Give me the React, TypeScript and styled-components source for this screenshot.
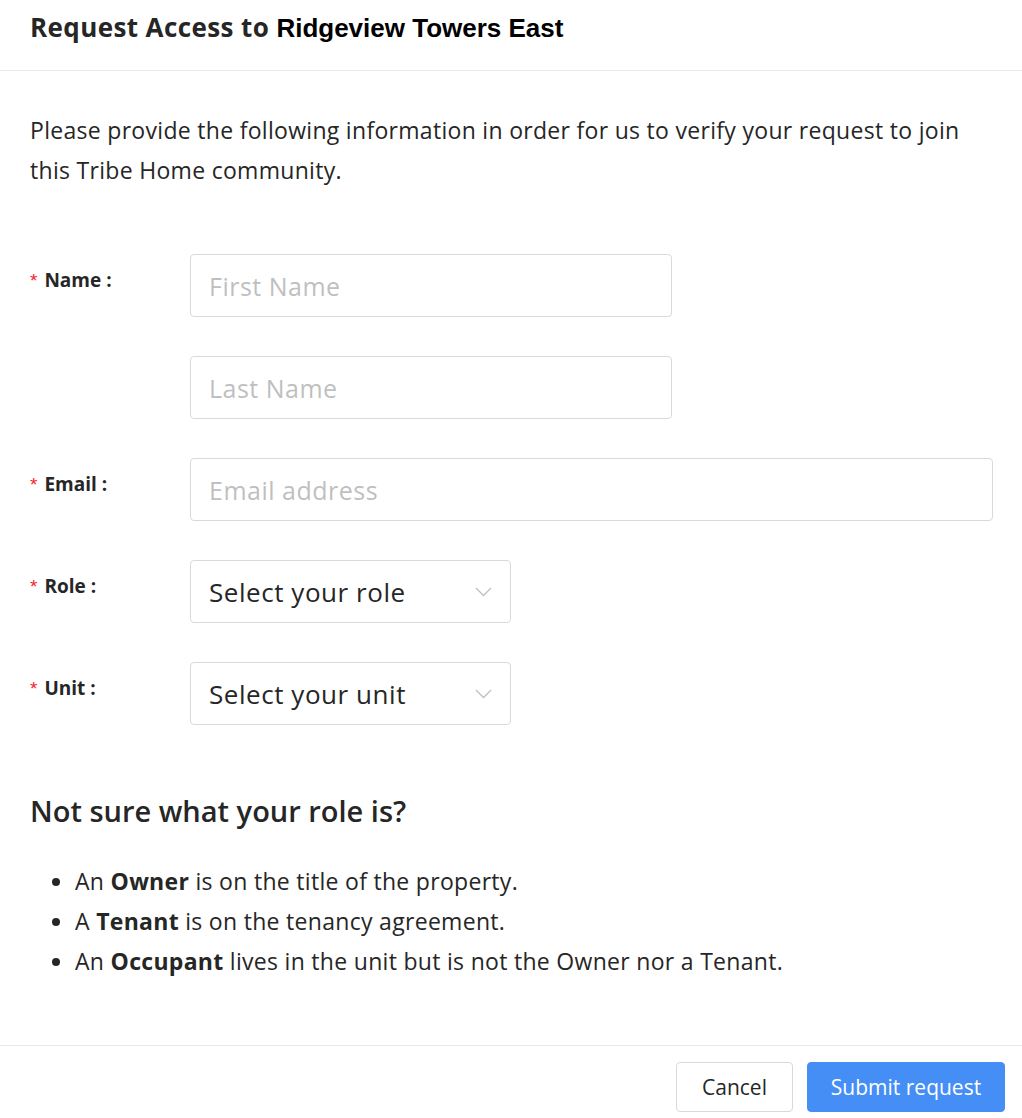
import React from "react";
import styled, { createGlobalStyle } from "styled-components";

const Global = createGlobalStyle`
  html, body { margin: 0; padding: 0; background: #ffffff; }
  body { font-family: "Open Sans", "Liberation Sans", sans-serif; color: #262626; }
  * { box-sizing: border-box; }
`;

const Modal = styled.div`
  width: 1022px;
  display: flex;
  flex-direction: column;
  background: #fff;
`;

const Header = styled.div`
  height: 71px;
  padding: 11px 30px 0 30px;
  border-bottom: 1px solid #e8e8e8;
`;

const Title = styled.h1`
  margin: 0;
  font-size: 26px;
  line-height: 32px;
  font-weight: 700;
  color: #262626;
  letter-spacing: 0.4px;
`;

const Place = styled.span`
  font-family: "Liberation Sans", Arial, sans-serif;
  font-size: 26px;
  letter-spacing: 0;
  color: #000;
`;

const Body = styled.div`
  padding: 39px 29px 64px 30px;
`;

const Intro = styled.p`
  margin: 0;
  font-size: 23px;
  letter-spacing: 0.3px;
  line-height: 40px;
  color: #262626;
`;

const Form = styled.div`
  margin-top: 64px;
  display: grid;
  grid-template-columns: 160px 1fr;
  row-gap: 39px;
`;

const Label = styled.div`
  padding-top: 14px;
  font-size: 19px;
  line-height: 24px;
  font-weight: 700;
  color: #262626;
  display: flex;
  align-items: baseline;
`;

const Star = styled.span`
  color: #f5222d;
  font-size: 19px;
  margin-right: 7px;
  font-family: "Liberation Sans", sans-serif;
  font-weight: 400;
`;

const Colon = styled.span`
  margin-left: 5px;
`;

const Field = styled.div<{ $w: string }>`
  grid-column: 2;
  width: ${(p) => p.$w};
  height: 63px;
  border: 1px solid #d9d9d9;
  border-radius: 4px;
  padding: 0 18px;
  display: flex;
  align-items: center;
  justify-content: space-between;
  background: #fff;
`;

const Placeholder = styled.span`
  font-size: 25px;
  letter-spacing: 0.5px;
  color: #bfbfbf;
`;

const Value = styled.span`
  font-size: 26px;
  letter-spacing: 0.55px;
  color: #262626;
`;

const Chevron = () => (
  <svg width="17" height="10" viewBox="0 0 17 10" fill="none">
    <path d="M1 1 L8.5 8.5 L16 1" stroke="#bfbfbf" strokeWidth="1.3" />
  </svg>
);

const Help = styled.h2`
  margin: 66px 0 0 0;
  font-size: 29px;
  line-height: 40px;
  font-weight: 600;
  color: #262626;
`;

const List = styled.ul`
  margin: 30px 0 0 0;
  padding-left: 45px;
  font-size: 23px;
  letter-spacing: 0.3px;
  line-height: 40px;
  color: #262626;
`;

const Item = styled.li`
  padding-left: 0;
`;

const Footer = styled.div`
  border-top: 1px solid #e8e8e8;
  padding: 16px 17px 5px 0;
  display: flex;
  justify-content: flex-end;
  gap: 14px;
`;

const Button = styled.button<{ $primary?: boolean; $w: number }>`
  width: ${(p) => p.$w}px;
  height: 50px;
  padding: 0;
  font-family: inherit;
  font-size: 21px;
  border-radius: 4px;
  border: 1px solid ${(p) => (p.$primary ? "#448ef6" : "#d9d9d9")};
  background: ${(p) => (p.$primary ? "#448ef6" : "#fff")};
  color: ${(p) => (p.$primary ? "#fff" : "#262626")};
  cursor: pointer;
`;

export default function App() {
  return (
    <>
      <Global />
      <Modal>
        <Header>
          <Title>
            Request Access to <Place>Ridgeview Towers East</Place>
          </Title>
        </Header>
        <Body>
          <Intro>
            Please provide the following information in order for us to verify your request to join
            this Tribe Home community.
          </Intro>
          <Form>
            <Label>
              <Star>*</Star>Name<Colon>:</Colon>
            </Label>
            <Field $w="482px">
              <Placeholder>First Name</Placeholder>
            </Field>
            <Field $w="482px">
              <Placeholder>Last Name</Placeholder>
            </Field>
            <Label>
              <Star>*</Star>Email<Colon>:</Colon>
            </Label>
            <Field $w="100%">
              <Placeholder>Email address</Placeholder>
            </Field>
            <Label>
              <Star>*</Star>Role<Colon>:</Colon>
            </Label>
            <Field $w="321px">
              <Value>Select your role</Value>
              <Chevron />
            </Field>
            <Label>
              <Star>*</Star>Unit<Colon>:</Colon>
            </Label>
            <Field $w="321px">
              <Value>Select your unit</Value>
              <Chevron />
            </Field>
          </Form>
          <Help>Not sure what your role is?</Help>
          <List>
            <Item>
              An <b>Owner</b> is on the title of the property.
            </Item>
            <Item>
              A <b>Tenant</b> is on the tenancy agreement.
            </Item>
            <Item>
              An <b>Occupant</b> lives in the unit but is not the Owner nor a Tenant.
            </Item>
          </List>
        </Body>
        <Footer>
          <Button $w={117}>Cancel</Button>
          <Button $primary $w={198}>
            Submit request
          </Button>
        </Footer>
      </Modal>
    </>
  );
}
